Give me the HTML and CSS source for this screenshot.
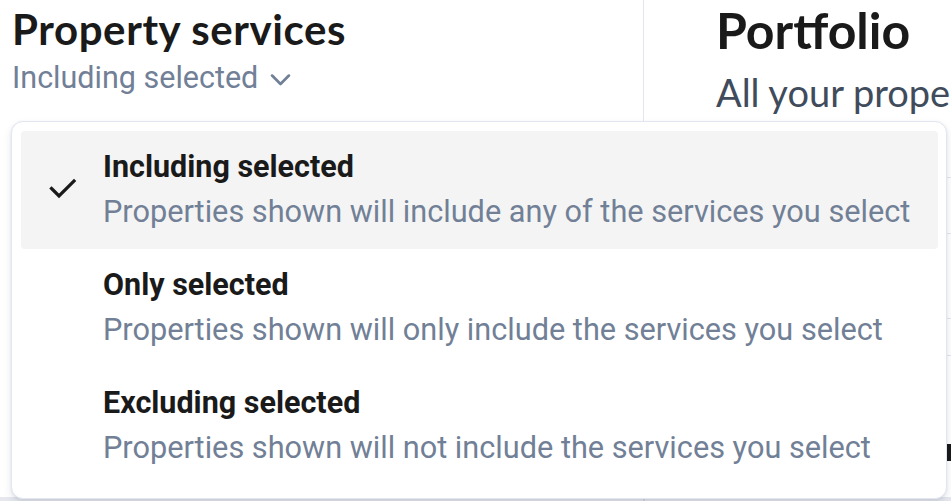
FILE: index.html
```html
<!DOCTYPE html>
<html lang="en">
<head>
<meta charset="utf-8">
<title>Property services</title>
<link rel="stylesheet" href="styles.css">
</head>
<body>
<div class="page">
  <div class="main">
    <aside class="filter-panel">
      <h2 class="filter-title">Property services</h2>
      <button class="filter-toggle" type="button">
        <span>Including selected</span>
        <svg class="chevron" viewBox="0 0 24 24" width="24" height="24" aria-hidden="true"><path d="M4.5 8.5l7.5 7.5 7.5-7.5" fill="none" stroke="currentColor" stroke-width="2.4" stroke-linecap="round" stroke-linejoin="round"/></svg>
      </button>
    </aside>
    <section class="content">
      <header class="portfolio-head">
        <h1 class="portfolio-title">Portfolio</h1>
        <p class="portfolio-sub">All your properties in one place</p>
      </header>
      <div class="table">
        <div class="row r1"></div>
        <div class="row r2"></div>
        <div class="row r3"></div>
        <div class="row r4"></div>
        <div class="row r5"><span class="cell-mark"></span></div>
      </div>
    </section>
  </div>
  <div class="footer-band"><span class="band-divider"></span></div>

  <ul class="menu" role="listbox">
    <li class="option selected" role="option" aria-selected="true">
      <span class="check">
        <svg viewBox="0 0 28 28" width="28" height="28" aria-hidden="true"><path d="M2.5 13.5l7.5 7.5L25 6" fill="none" stroke="currentColor" stroke-width="3.2" stroke-linecap="square"/></svg>
      </span>
      <div class="option-text">
        <div class="option-title">Including selected</div>
        <div class="option-desc">Properties shown will include any of the services you select</div>
      </div>
    </li>
    <li class="option" role="option">
      <span class="check"></span>
      <div class="option-text">
        <div class="option-title">Only selected</div>
        <div class="option-desc">Properties shown will only include the services you select</div>
      </div>
    </li>
    <li class="option" role="option">
      <span class="check"></span>
      <div class="option-text">
        <div class="option-title">Excluding selected</div>
        <div class="option-desc">Properties shown will not include the services you select</div>
      </div>
    </li>
  </ul>
</div>
</body>
</html>
```

FILE: styles.css
```css
* { box-sizing: border-box; }
html, body { margin: 0; padding: 0; background: #ffffff; }
body {
  width: 951px;
  height: 501px;
  overflow: hidden;
  font-family: Roboto, "Liberation Sans", sans-serif;
}
.page {
  position: relative;
  width: 951px;
  height: 501px;
  display: flex;
  flex-direction: column;
  overflow: hidden;
}
.main {
  display: flex;
  height: 497px;
  flex: 0 0 497px;
}
.filter-panel {
  flex: 0 0 644px;
  border-right: 1px solid #e3e6ec;
  padding: 6px 0 0 12px;
}
.filter-title {
  margin: 0;
  font-family: Lato, "Noto Sans", sans-serif;
  font-weight: 700;
  font-size: 42px;
  line-height: 46px;
  letter-spacing: 0.6px;
  color: #1a1a1a;
}
.filter-toggle {
  margin-top: 6px;
  display: flex;
  align-items: center;
  gap: 9px;
  padding: 0;
  border: 0;
  background: none;
  font-family: Roboto, sans-serif;
  font-size: 30.5px;
  line-height: 40px;
  color: #718096;
}
.chevron { width: 27px; height: 27px; margin-top: 2px; }
.content {
  flex: 1 1 auto;
  min-width: 0;
}
.portfolio-head {
  padding: 0 0 0 72px;
  white-space: nowrap;
  height: 121px;
}
.portfolio-title {
  margin: 0;
  font-family: Lato, "Noto Sans", sans-serif;
  font-weight: 700;
  font-size: 50px;
  line-height: 60px;
  color: #1a1a1a;
}
.portfolio-sub {
  margin: 8px 0 0;
  font-family: Lato, sans-serif;
  font-size: 38px;
  line-height: 48px;
  color: #404b5c;
}
.table { display: flex; flex-direction: column; }
.row { border-bottom: 1px solid #e3e6ec; }
.r1 { height: 57px; }
.r2 { height: 56px; }
.r3 { height: 85px; }
.r4 { height: 37px; }
.r5 { height: 110px; border-bottom: 0; display: flex; justify-content: flex-end; align-items: flex-start; padding-top: 88px; }
.cell-mark { width: 4px; height: 17px; background: #1a1a1a; }
.footer-band {
  flex: 0 0 4px;
  background: #e6e8ee;
  display: flex;
}
.band-divider { margin-left: 643px; width: 2px; background: #d3d7df; }

.menu {
  position: absolute;
  left: 11px;
  top: 121px;
  width: 936px;
  margin: 0;
  padding: 9px 8px 13px 9px;
  list-style: none;
  background: #ffffff;
  border: 1px solid #e1e6f0;
  border-radius: 12px;
  box-shadow: 0 4px 8px rgba(30, 40, 70, 0.10), 0 1px 3px rgba(30, 40, 70, 0.08);
}
.option {
  display: flex;
  align-items: center;
  padding: 13px 0 15px;
  border-radius: 4px;
}
.option.selected { background: #f4f4f4; }
.check {
  width: 82px;
  flex: 0 0 82px;
  display: flex;
  justify-content: center;
  padding-left: 2px;
  color: #1a1a1a;
}
.option-title {
  font-weight: 700;
  font-size: 30.5px;
  line-height: 45px;
  color: #1a1a1a;
}
.option-desc {
  font-size: 30.7px;
  line-height: 45px;
  color: #718096;
}
```
